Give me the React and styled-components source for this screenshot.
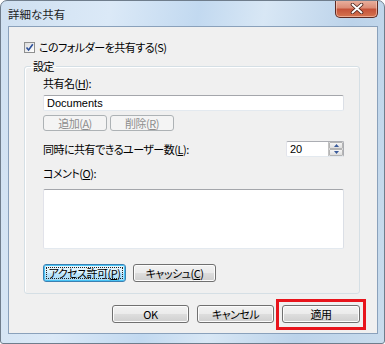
import React from "react";
import styled, { createGlobalStyle, css } from "styled-components";

const Global = createGlobalStyle`
  html, body { margin: 0; padding: 0; background: #ffffff; }
  body { font-family: "Noto Sans CJK JP", "Liberation Sans", sans-serif; }
  * { box-sizing: border-box; }
`;

const FONT = `"Noto Sans CJK JP", "Liberation Sans", sans-serif`;

const Window = styled.div`
  width: 385px;
  height: 344px;
  display: flex;
  flex-direction: column;
  padding: 0 6px 9px 7px;
  border: 1px solid #6f7d8c;
  border-radius: 7px 7px 3px 3px;
  background: linear-gradient(100deg, #cfe0f1 0%, #dbe9f7 25%, #c2d9f0 45%, #d8e7f5 60%, #bcd3ea 80%, #c9dced 100%);
  overflow: hidden;
  font-feature-settings: "palt";
`;

const TitleBar = styled.div`
  height: 25px;
  display: flex;
  justify-content: space-between;
  align-items: flex-start;
  flex-shrink: 0;
`;

const Title = styled.div`
  font-family: ${FONT};
  font-size: 11.5px;
  line-height: 14px;
  color: #1e1e1e;
  padding-top: 6px;
`;

const CloseButton = styled.div`
  width: 43px;
  height: 18px;
  margin-top: -1px;
  border: 1px solid #5d2a22;
  border-top: none;
  border-radius: 0 0 5px 5px;
  background: linear-gradient(to bottom, #eab3a2 0%, #dc8d77 45%, #c5533a 55%, #d57550 100%);
  box-shadow: inset 0 0 0 1px rgba(255, 215, 200, 0.55);
  display: flex;
  align-items: center;
  justify-content: center;
`;

const Client = styled.div`
  flex: 1;
  background: #f0f0f0;
  border: 1px solid #8aa1bb;
  padding: 14px 16px 0 15px;
  display: flex;
  flex-direction: column;
  font-family: ${FONT};
  font-size: 11px;
  letter-spacing: -0.5px;
  color: #000;
`;

const CheckRow = styled.label`
  display: flex;
  align-items: center;
  gap: 4px;
  height: 13px;
  line-height: 13px;
`;

const CheckBox = styled.span`
  width: 11px;
  height: 11px;
  border: 1px solid #8e8f8f;
  background: linear-gradient(135deg, #dcdcdc, #ffffff);
  display: flex;
  align-items: center;
  justify-content: center;
`;

const Group = styled.fieldset`
  margin: 5px 1px 0 0;
  padding: 0 15px 11px 18px;
  border: 1px solid #d5dfe5;
  border-radius: 3px;
  box-shadow: inset 1px 1px 0 #ffffff;
  display: flex;
  flex-direction: column;
`;

const Legend = styled.legend`
  padding: 0 2px;
  margin-left: -12px;
  font-size: 11px;
  line-height: 14px;
`;

const Label = styled.div`
  line-height: 14px;
  height: 14px;
  margin-top: ${(p) => p.$mt || 0}px;
  white-space: nowrap;
`;

const U = styled.span`
  text-decoration: underline;
`;

const TextBox = styled.div`
  margin-top: ${(p) => p.$mt || 0}px;
  height: ${(p) => p.$h}px;
  background: #ffffff;
  border: 1px solid #abadb3;
  border-top-color: #a4a6ab;
  border-left-color: #e2e3ea;
  border-right-color: #dbdfe6;
  border-bottom-color: #e3e9ef;
  border-radius: 2px;
  padding: 0 3px;
  font-size: 11px;
  letter-spacing: 0;
  line-height: ${(p) => p.$h - 2}px;
  font-family: "Liberation Sans", sans-serif;
  display: flex;
  align-items: center;
`;

const Row = styled.div`
  display: flex;
  align-items: center;
  gap: ${(p) => p.$gap || 0}px;
  margin-top: ${(p) => p.$mt || 0}px;
  justify-content: ${(p) => p.$justify || "flex-start"};
`;

const Button = styled.div`
  position: relative;
  width: ${(p) => p.$w}px;
  height: ${(p) => p.$h || 17}px;
  border: 1px solid #707070;
  border-radius: 3px;
  background: linear-gradient(to bottom, #f2f2f2 0%, #ebebeb 48%, #dddddd 52%, #cfcfcf 100%);
  box-shadow: inset 0 0 0 1px #fcfcfc;
  display: flex;
  align-items: center;
  justify-content: center;
  font-size: 11px;
  line-height: 12px;
  color: ${(p) => (p.$disabled ? "#8d8d8d" : "#000")};
  white-space: nowrap;
  ${(p) =>
    p.$disabled &&
    css`
      border-color: #adb2b5;
      background: #f4f4f4;
      box-shadow: none;
    `}
  ${(p) =>
    p.$focused &&
    css`
      border-color: #3c7fb1;
      background: linear-gradient(to bottom, #eaf6fd 0%, #d9f0fc 48%, #bee6fd 52%, #a7d9f5 100%);
      box-shadow: inset 0 0 0 1px #48c4f5;
      &::before {
        content: "";
        position: absolute;
        inset: 2px;
        border: 1px dotted #202020;
      }
    `}
  ${(p) =>
    p.$highlight &&
    css`
      &::after {
        content: "";
        position: absolute;
        left: -7px;
        right: -7px;
        top: -7px;
        bottom: -8px;
        border: 3px solid #e8141c;
      }
    `}
`;

const Spin = styled.div`
  width: 58px;
  height: 16px;
  display: flex;
  background: #fff;
  border: 1px solid #abadb3;
  border-left-color: #e2e3ea;
  border-bottom-color: #e3e9ef;
  border-radius: 2px;
`;

const SpinValue = styled.div`
  flex: 1;
  padding-left: 3px;
  font-family: "Liberation Sans", sans-serif;
  font-size: 11px;
  letter-spacing: 0;
  line-height: 14px;
`;

const SpinButtons = styled.div`
  width: 15px;
  display: flex;
  flex-direction: column;
  border-left: 1px solid #c2c2c2;
`;

const SpinBtn = styled.div`
  flex: 1;
  display: flex;
  align-items: center;
  justify-content: center;
  background: linear-gradient(to bottom, #f6f6f6, #dedede);
  border: 1px solid #b5b5b5;
  border-radius: 1px;
`;

const Footer = styled.div`
  display: flex;
  justify-content: flex-end;
  gap: 8px;
  margin-top: 11px;
  padding-right: 1px;
`;

function CheckMark() {
  return (
    <svg width="9" height="9" viewBox="0 0 9 9">
      <path d="M1.5 4.5 L3.6 7 L7.8 1.2" fill="none" stroke="#2b4f9a" strokeWidth="1.6" />
    </svg>
  );
}

function CloseX() {
  return (
    <svg width="14" height="11" viewBox="0 0 14 11">
      <path d="M2.5 1.5 L11.5 9.5 M11.5 1.5 L2.5 9.5" stroke="#4a2018" strokeWidth="3.6" strokeLinecap="round" />
      <path d="M2.5 1.5 L11.5 9.5 M11.5 1.5 L2.5 9.5" stroke="#ffffff" strokeWidth="2" strokeLinecap="round" />
    </svg>
  );
}

function Arrow({ up }) {
  return (
    <svg width="5" height="3" viewBox="0 0 5 3">
      <path d={up ? "M0 3 L2.5 0 L5 3 Z" : "M0 0 L2.5 3 L5 0 Z"} fill="#3a5a9a" />
    </svg>
  );
}

export default function App() {
  return (
    <>
      <Global />
      <Window>
        <TitleBar>
          <Title>詳細な共有</Title>
          <CloseButton>
            <CloseX />
          </CloseButton>
        </TitleBar>
        <Client>
          <CheckRow>
            <CheckBox>
              <CheckMark />
            </CheckBox>
            <span>このフォルダーを共有する(S)</span>
          </CheckRow>
          <Group>
            <Legend>設定</Legend>
            <Label $mt={3}>
              共有名(<U>H</U>):
            </Label>
            <TextBox $mt={5} $h={16}>Documents</TextBox>
            <Row $mt={4} $gap={3}>
              <Button $w={64} $h={16} $disabled>
                追加(<U>A</U>)
              </Button>
              <Button $w={64} $h={16} $disabled>
                削除(<U>R</U>)
              </Button>
            </Row>
            <Row $mt={10} $justify="space-between">
              <Label>
                同時に共有できるユーザー数(<U>L</U>):
              </Label>
              <Spin>
                <SpinValue>20</SpinValue>
                <SpinButtons>
                  <SpinBtn>
                    <Arrow up />
                  </SpinBtn>
                  <SpinBtn>
                    <Arrow />
                  </SpinBtn>
                </SpinButtons>
              </Spin>
            </Row>
            <Label $mt={9}>
              コメント(<U>O</U>):
            </Label>
            <TextBox $mt={9} $h={60} />
            <Row $mt={15} $gap={7}>
              <Button $w={83} $h={18} $focused>
                アクセス許可(<U>P</U>)
              </Button>
              <Button $w={83} $h={18}>
                キャッシュ(<U>C</U>)
              </Button>
            </Row>
          </Group>
          <Footer>
            <Button $w={77} $h={18}>OK</Button>
            <Button $w={77} $h={18}>キャンセル</Button>
            <Button $w={78} $h={18} $highlight>
              適用
            </Button>
          </Footer>
        </Client>
      </Window>
    </>
  );
}
